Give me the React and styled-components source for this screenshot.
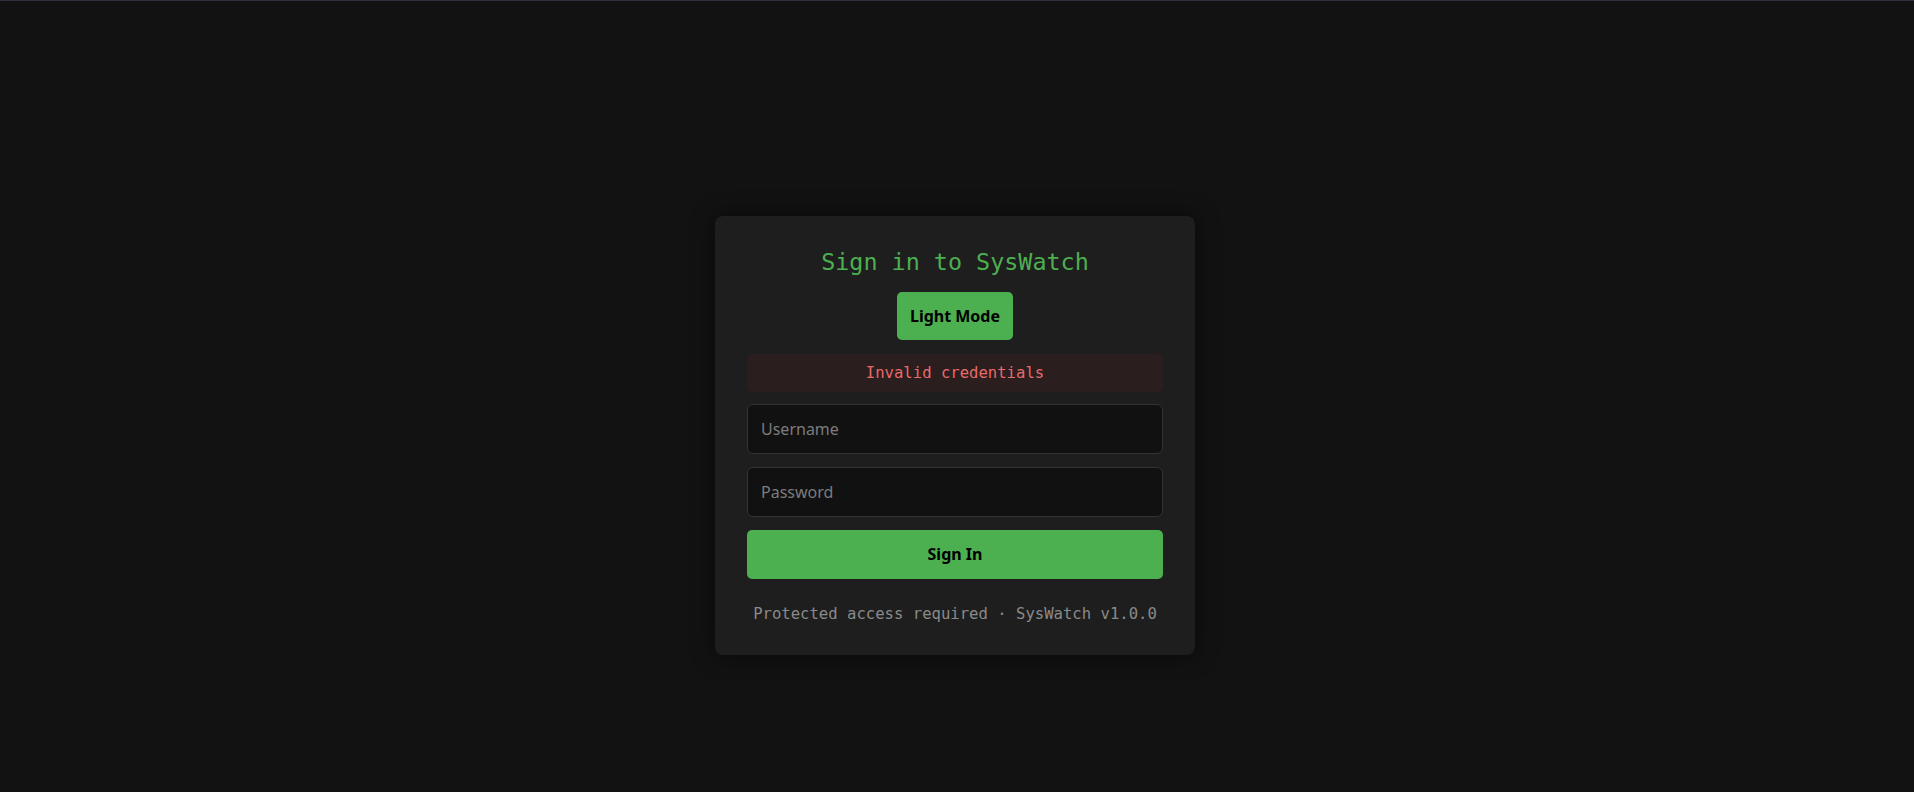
import React, { useState } from "react";
import styled, { createGlobalStyle } from "styled-components";

const GlobalStyle = createGlobalStyle`
  html, body {
    margin: 0;
    padding: 0;
    background: #121212;
  }
  body {
    border-top: 1px solid #2f323a;
    font-family: "Noto Sans", sans-serif;
  }
  * {
    box-sizing: border-box;
  }
`;

const Page = styled.div`
  min-height: 791px;
  display: flex;
  justify-content: center;
  align-items: flex-start;
  padding: 215px 4px 0 0;
`;

const Card = styled.div`
  width: 480px;
  padding: 32px;
  background: #1e1e1e;
  border-radius: 8px;
  box-shadow: 0 0 22px rgba(0, 0, 0, 0.55);
  display: flex;
  flex-direction: column;
  align-items: center;
`;

const Title = styled.h2`
  margin: 0 0 16px;
  font-family: "DejaVu Sans Mono", monospace;
  font-size: 23.4px;
  font-weight: normal;
  line-height: 28px;
  color: #4caf50;
`;

const Button = styled.button`
  border: none;
  border-radius: 5px;
  background: #4caf50;
  color: #000;
  font-family: "Noto Sans", sans-serif;
  font-size: 16px;
  font-weight: 700;
  line-height: 22.4px;
  padding: 13px;
  cursor: pointer;
  width: ${(p) => (p.$full ? "100%" : "auto")};
`;

const ErrorBox = styled.div`
  width: 100%;
  margin: 13.5px 0 12px;
  padding: 10px;
  border-radius: 5px;
  background: #2b1e1e;
  color: #e86a6a;
  text-align: center;
  font-family: "DejaVu Sans Mono", monospace;
  font-size: 15.6px;
  line-height: 18.5px;
`;

const Form = styled.form`
  width: 100%;
  display: flex;
  flex-direction: column;
  gap: 13.5px;
`;

const Input = styled.input`
  width: 100%;
  height: 49.4px;
  padding: 0 13px;
  background: #111111;
  border: 1px solid #333333;
  border-radius: 6px;
  color: #ddd;
  font-family: "Noto Sans", sans-serif;
  font-size: 16px;
  outline: none;

  &::placeholder {
    color: #7c7c7c;
  }
`;

const Footer = styled.p`
  margin: 26px 0 0;
  font-family: "DejaVu Sans Mono", monospace;
  font-size: 15.6px;
  line-height: 18px;
  color: #8a8a8a;
  text-align: center;
`;

export default function App() {
  const [light, setLight] = useState(false);
  const [username, setUsername] = useState("");
  const [password, setPassword] = useState("");

  return (
    <>
      <GlobalStyle />
      <Page>
        <Card>
          <Title>Sign in to SysWatch</Title>
          <Button type="button" onClick={() => setLight(!light)}>
            {light ? "Dark Mode" : "Light Mode"}
          </Button>
          <ErrorBox>Invalid credentials</ErrorBox>
          <Form onSubmit={(e) => e.preventDefault()}>
            <Input
              placeholder="Username"
              value={username}
              onChange={(e) => setUsername(e.target.value)}
            />
            <Input
              type="password"
              placeholder="Password"
              value={password}
              onChange={(e) => setPassword(e.target.value)}
            />
            <Button type="submit" $full>
              Sign In
            </Button>
          </Form>
          <Footer>Protected access required · SysWatch v1.0.0</Footer>
        </Card>
      </Page>
    </>
  );
}
